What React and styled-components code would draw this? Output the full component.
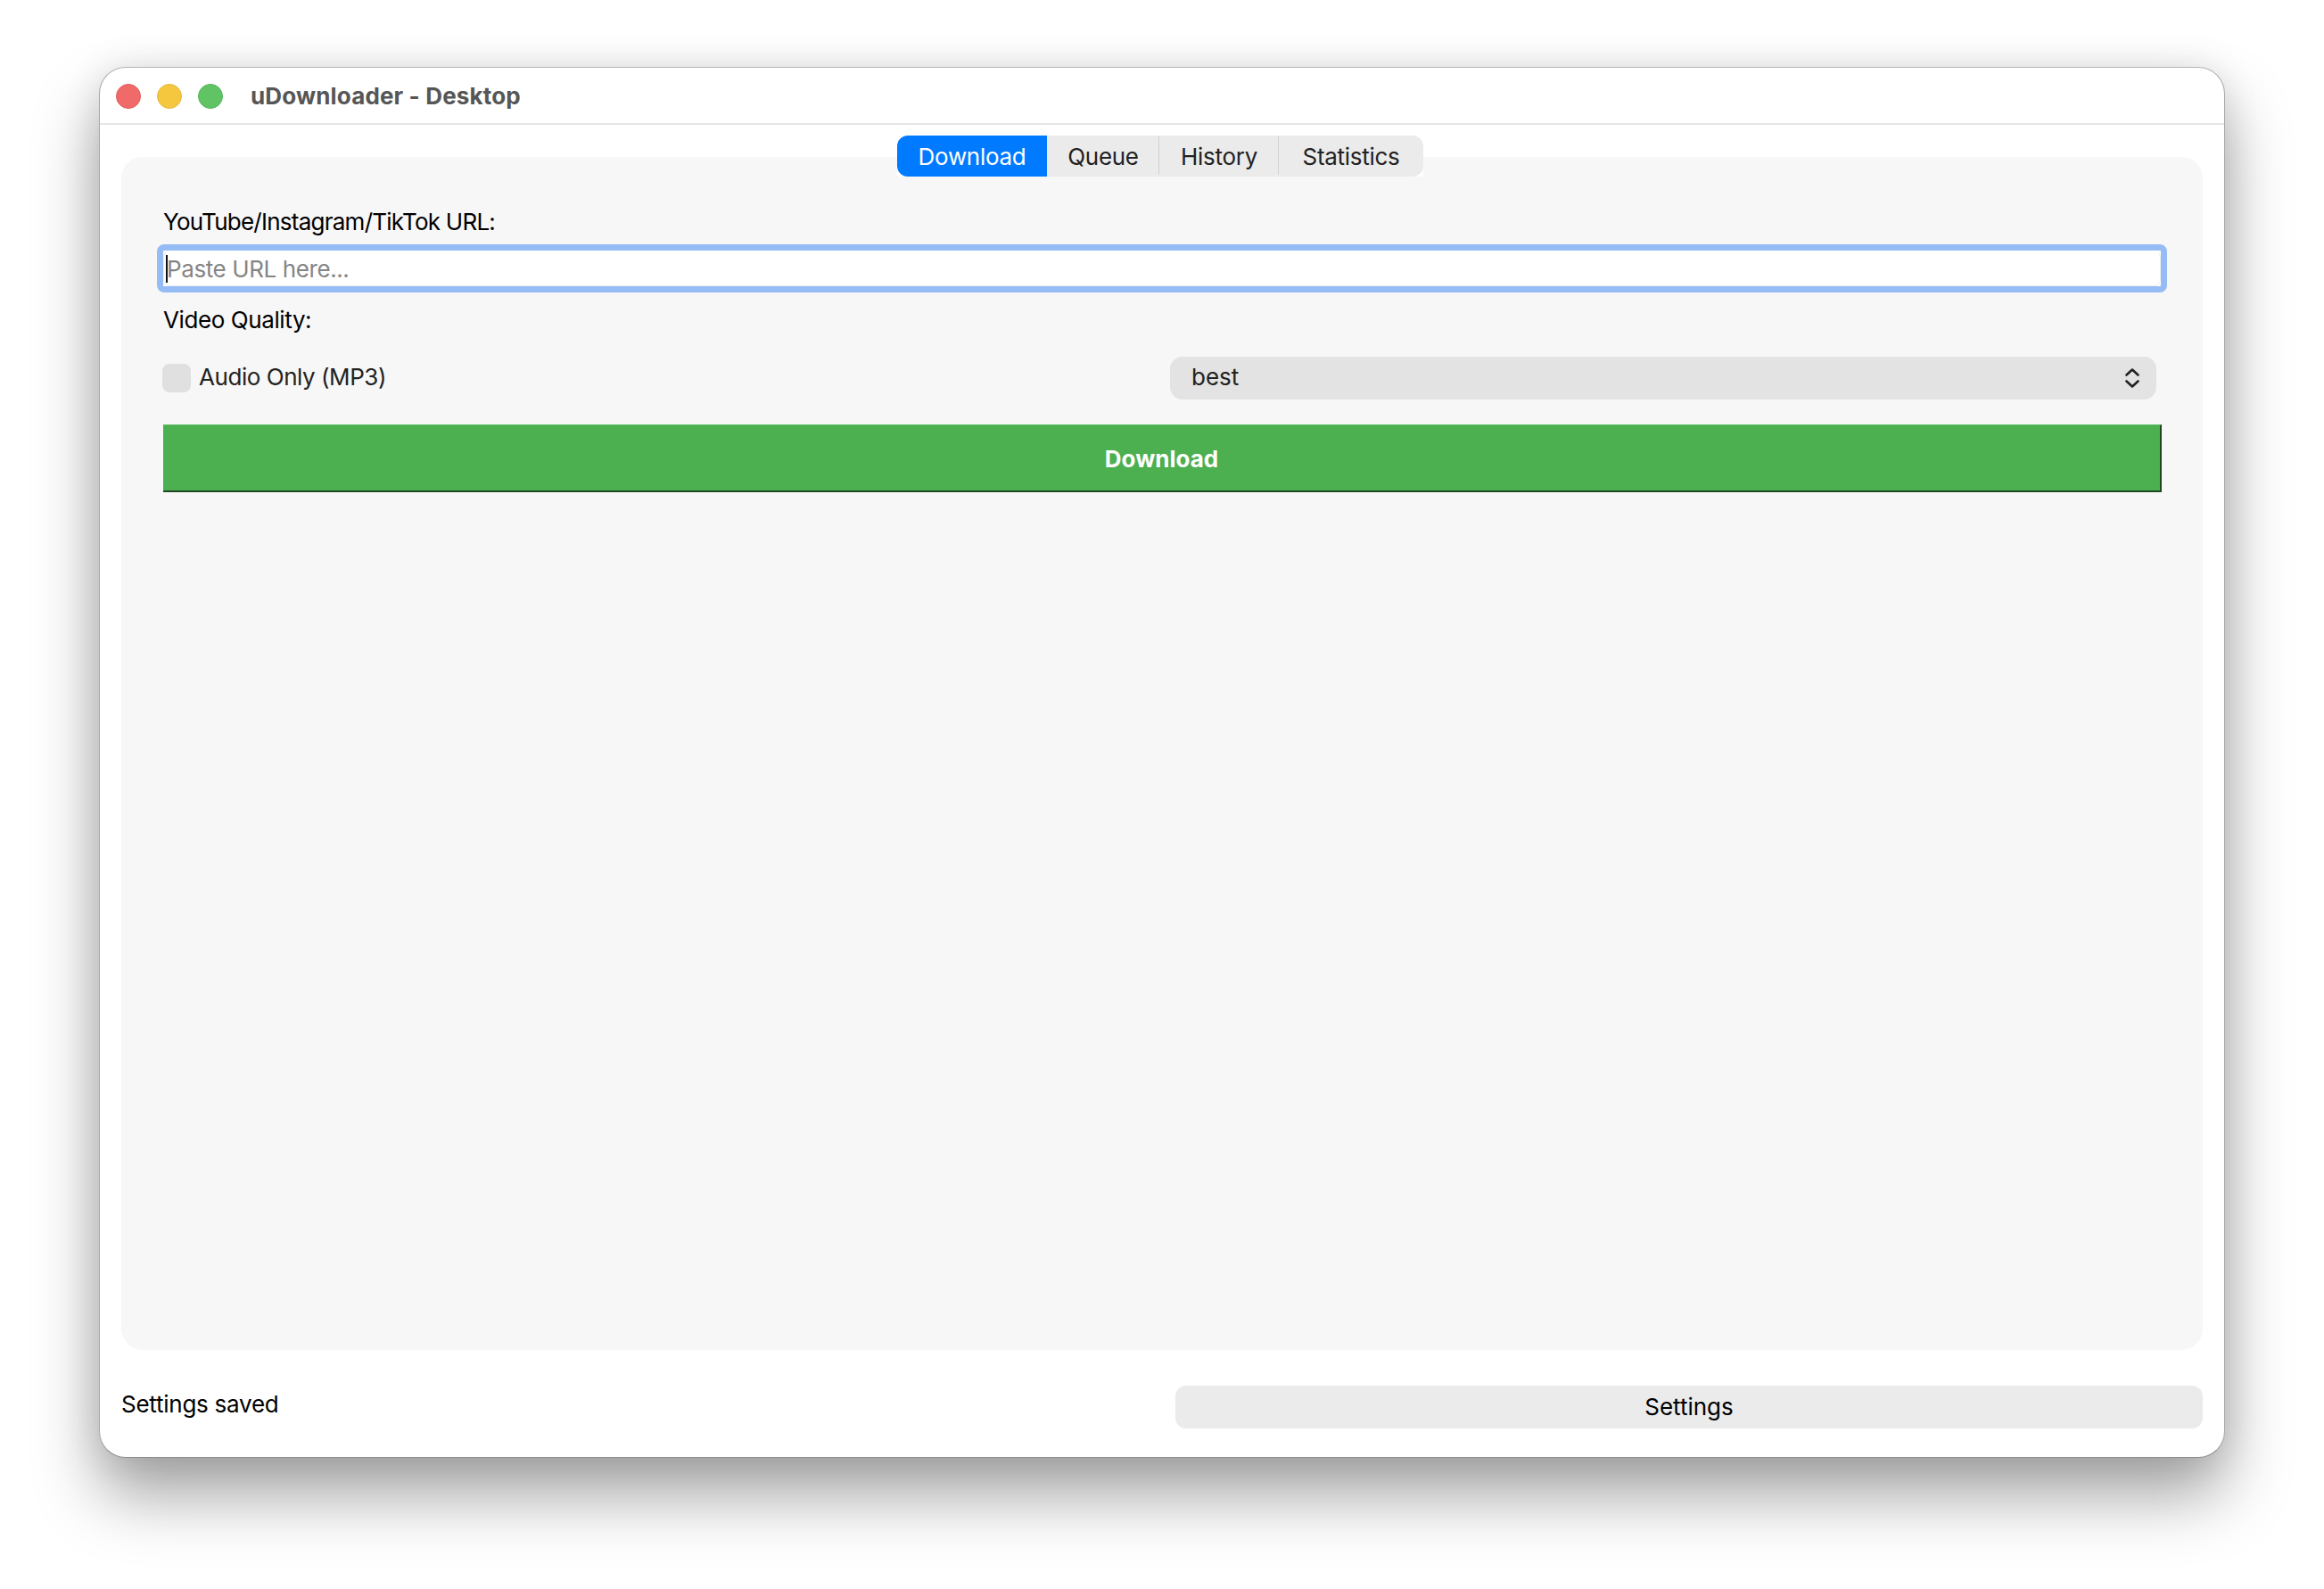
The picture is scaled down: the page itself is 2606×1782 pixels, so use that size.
import React from "react";
import styled, { createGlobalStyle } from "styled-components";

const Global = createGlobalStyle`
  html, body { margin: 0; padding: 0; background: #fff; }
  body { font-family: Inter, "Liberation Sans", sans-serif; -webkit-font-smoothing: antialiased; }
  * { box-sizing: border-box; }
`;

const Page = styled.div`
  width: 2606px;
  height: 1782px;
  padding: 75px 0 0 111px;
  overflow: hidden;
  background: #fff;
`;

const Win = styled.div`
  width: 2384px;
  height: 1560px;
  display: flex;
  flex-direction: column;
  background: #fff;
  border-radius: 30px;
  border: 1px solid #b4b4b4;
  border-bottom-color: #8e8e8e;
  border-right-color: #a8a8a8;
  border-left-color: #a8a8a8;
  box-shadow: 0 42px 72px rgba(0, 0, 0, 0.36), 0 0 40px rgba(0, 0, 0, 0.1);
`;

const TitleBar = styled.header`
  height: 64px;
  flex: none;
  display: flex;
  align-items: center;
  padding: 1px 0 0 18px;
  border-bottom: 2px solid #e6e6e6;
`;

const Lights = styled.div`
  display: flex;
  gap: 18px;
  margin-right: 31px;
`;

const Light = styled.span`
  width: 28px;
  height: 28px;
  border-radius: 50%;
  background: ${(p) => p.$color};
  border: 1px solid ${(p) => p.$edge};
`;

const Title = styled.h1`
  margin: 0;
  font-size: 26px;
  font-weight: 700;
  line-height: 36px;
  padding-top: 1px;
  letter-spacing: 0.15px;
  color: #565656;
`;

const Content = styled.main`
  flex: 1;
  display: flex;
  flex-direction: column;
  padding: 12px 24px 0 24px;
`;

const TabRow = styled.nav`
  display: flex;
  justify-content: center;
  padding-right: 4px;
  margin-bottom: -22px;
  position: relative;
  z-index: 1;
`;

const TabGroup = styled.div`
  display: flex;
  height: 46px;
  background: #fff;
`;

const Tab = styled.button`
  height: 46px;
  width: ${(p) => p.$width}px;
  padding: 1px 0 0;
  border: 0;
  font: 400 26px/45px Inter, "Liberation Sans", sans-serif;
  letter-spacing: -0.3px;
  color: ${(p) => (p.$active ? "#fff" : "#222")};
  background: ${(p) => (p.$active ? "#007aff" : "#ebebeb")};
  border-radius: ${(p) => (p.$first ? "12px 0 0 12px" : p.$last ? "0 12px 12px 0" : "0")};
  position: relative;
  &::after {
    content: "";
    display: ${(p) => (p.$divider ? "block" : "none")};
    position: absolute;
    right: -1px;
    top: 1px;
    bottom: 2px;
    width: 2px;
    background: #d2d2d2;
  }
`;

const Panel = styled.section`
  height: 1338px;
  flex: none;
  background: #f7f7f7;
  border-radius: 24px;
  padding: 58px 46px 0 47px;
`;

const Label = styled.label`
  display: block;
  font-size: 26px;
  line-height: 30px;
  letter-spacing: ${(p) => p.$spacing}px;
  color: #000;
`;

const FocusRing = styled.div`
  position: relative;
  margin: 10px -6px 16px -7px;
  height: 54px;
  border: 7px solid #96bcf5;
  border-radius: 8px;
  background: #fff;
`;

const UrlInput = styled.input`
  display: block;
  width: 100%;
  height: 40px;
  padding: 0 3px;
  border: 1px solid #efefef;
  border-top-color: #fff;
  border-radius: 8px;
  outline: 0;
  background: #fff;
  font: 400 26px/38px Inter, "Liberation Sans", sans-serif;
  letter-spacing: -0.4px;
  color: #000;
  caret-color: transparent;
  &::placeholder { color: #858585; opacity: 1; }
`;

const Caret = styled.span`
  position: absolute;
  left: 3px;
  top: 5px;
  width: 2px;
  height: 31px;
  background: #111;
`;

const OptionsRow = styled.div`
  display: grid;
  grid-template-columns: 1fr 1106px;
  align-items: center;
  height: 48px;
  margin-top: 26px;
  padding-right: 6px;
`;

const CheckLabel = styled.label`
  display: flex;
  align-items: center;
  gap: 9px;
  margin-left: -1px;
  font-size: 26px;
  line-height: 32px;
  letter-spacing: -0.45px;
  color: #222;
`;

const CheckBox = styled.span`
  width: 32px;
  height: 32px;
  flex: none;
  border-radius: 8px;
  background: #e0e0e0;
`;

const CheckText = styled.span`
  margin-top: -2px;
`;

const Select = styled.div`
  height: 48px;
  display: flex;
  align-items: center;
  justify-content: space-between;
  padding: 0 18px 3px 24px;
  border-radius: 14px;
  background: #e3e3e3;
  font-size: 26px;
  color: #222;
`;

const Chevrons = styled.svg`
  display: block;
  width: 18px;
  height: 26px;
  margin-top: 3px;
`;

const DownloadButton = styled.button`
  display: block;
  width: 100%;
  height: 76px;
  margin-top: 28px;
  border: 0;
  border-top: 1px solid #5cbd60;
  border-right: 2px solid #1f4a21;
  border-bottom: 2px solid #1f4a21;
  background: #4caf50;
  color: #fff;
  font: 700 26px/74px Inter, "Liberation Sans", sans-serif;
`;

const Footer = styled.footer`
  display: flex;
  justify-content: space-between;
  align-items: flex-start;
  margin-top: 40px;
`;

const Status = styled.div`
  font-size: 26px;
  line-height: 42px;
  letter-spacing: -0.25px;
  color: #000;
`;

const SettingsButton = styled.button`
  width: 1152px;
  height: 48px;
  padding: 0 0 1px;
  border: 0;
  border-radius: 12px;
  background: #ebebeb;
  color: #000;
  font: 400 26px/47px Inter, "Liberation Sans", sans-serif;
`;

const tabs = [
  { name: "Download", width: 168, active: true, first: true },
  { name: "Queue", width: 126, divider: true },
  { name: "History", width: 134, divider: true },
  { name: "Statistics", width: 162, last: true },
];

export default function App() {
  return (
    <Page>
      <Global />
      <Win>
        <TitleBar>
          <Lights>
            <Light $color="#f06a6a" $edge="#e25a5a" />
            <Light $color="#f5c73f" $edge="#e8b93a" />
            <Light $color="#61c464" $edge="#55b559" />
          </Lights>
          <Title>uDownloader - Desktop</Title>
        </TitleBar>
        <Content>
          <TabRow>
            <TabGroup>
              {tabs.map((t) => (
                <Tab key={t.name} $width={t.width} $active={t.active} $first={t.first} $last={t.last} $divider={t.divider}>
                  {t.name}
                </Tab>
              ))}
            </TabGroup>
          </TabRow>
          <Panel>
            <Label $spacing={-0.75}>YouTube/Instagram/TikTok URL:</Label>
            <FocusRing>
              <UrlInput placeholder="Paste URL here..." readOnly />
              <Caret />
            </FocusRing>
            <Label $spacing={-0.4}>Video Quality:</Label>
            <OptionsRow>
              <CheckLabel>
                <CheckBox />
                <CheckText>Audio Only (MP3)</CheckText>
              </CheckLabel>
              <Select>
                best
                <Chevrons viewBox="0 0 18 26" fill="none" stroke="#222" strokeWidth="2.6" strokeLinecap="round" strokeLinejoin="round">
                  <path d="M2.5 9.5 9 3.5l6.5 6" />
                  <path d="M2.5 16.5 9 22.5l6.5-6" />
                </Chevrons>
              </Select>
            </OptionsRow>
            <DownloadButton>Download</DownloadButton>
          </Panel>
          <Footer>
            <Status>Settings saved</Status>
            <SettingsButton>Settings</SettingsButton>
          </Footer>
        </Content>
      </Win>
    </Page>
  );
}
